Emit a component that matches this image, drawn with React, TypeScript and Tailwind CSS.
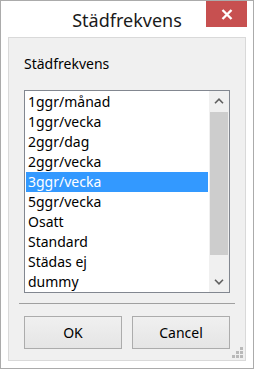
const items = [
  '1ggr/månad',
  '1ggr/vecka',
  '2ggr/dag',
  '2ggr/vecka',
  '3ggr/vecka',
  '5ggr/vecka',
  'Osatt',
  'Standard',
  'Städas ej',
  'dummy',
];

const font = { fontFamily: '"Segoe UI", "Noto Sans", sans-serif' };

function Chevron({ up }: { up?: boolean }) {
  return (
    <svg width="10" height="6" viewBox="0 0 10 6">
      <path
        d={up ? 'M1 5.2 L5 1.2 L9 5.2' : 'M1 0.8 L5 4.8 L9 0.8'}
        fill="none"
        stroke="#606060"
        strokeWidth="1.6"
      />
    </svg>
  );
}

function Grip() {
  // 3-2-1 triangle of dots in the bottom right corner
  const dots = [
    [8, 0],
    [4, 4],
    [8, 4],
    [0, 8],
    [4, 8],
    [8, 8],
  ];
  return (
    <svg width="11" height="11" viewBox="0 0 11 11" className="absolute right-[2px] bottom-[2px]">
      {dots.map(([x, y], i) => (
        <rect key={i} x={x} y={y} width="3" height="3" fill="#b9b9b9" />
      ))}
    </svg>
  );
}

export default function App() {
  const selected = 4;

  return (
    <div
      className="w-[254px] h-[369px] border border-[#ababab] bg-white flex flex-col text-black"
      style={font}
    >
      {/* title bar */}
      <div className="relative h-[36px] shrink-0 flex items-center justify-center">
        <span className="text-[18px] leading-[24px] text-[#1a1a1a] mt-[2px]">Städfrekvens</span>
        <div className="absolute top-0 right-[6px] w-[41px] h-[26px] bg-[#c75050] flex items-center justify-center">
          <svg width="12" height="11" viewBox="0 0 12 11">
            <path d="M1.5 1 L10.5 10 M10.5 1 L1.5 10" stroke="#fff" strokeWidth="2.4" />
          </svg>
        </div>
      </div>

      {/* client area */}
      <div className="relative flex-1 mx-[7px] mb-[7px] border border-[#d9d9d9] bg-[#f0f0f0] flex flex-col px-[15px] pt-[16px]">
        <div className="text-[14px] leading-[19px]">Städfrekvens</div>

        <div className="mt-[17px] h-[203px] border border-[#828790] bg-white flex">
          <div className="flex-1 pt-[1px] flex flex-col">
            {items.map((it, i) => (
              <div
                key={it}
                className={
                  'mx-[1px] h-[20px] leading-[20px] pl-[2px] text-[14px] ' +
                  (i === selected ? 'bg-[#3399ff] text-white' : 'text-black')
                }
              >
                {it}
              </div>
            ))}
          </div>
          <div className="w-[20px] bg-[#f0f0f0] flex flex-col">
            <div className="h-[20px] flex items-center justify-center">
              <Chevron up />
            </div>
            <div className="mx-[1px] mt-[1px] h-[143px] bg-[#cdcdcd]" />
            <div className="flex-1" />
            <div className="h-[20px] flex items-center justify-center">
              <Chevron />
            </div>
          </div>
        </div>

        <div className="-mx-[5px] mt-[10px] border-t border-[#a0a0a0]" />

        <div className="mt-[12px] flex gap-[10px]">
          <button className="flex-1 h-[33px] border border-[#acacac] bg-gradient-to-b from-[#f0f0f0] to-[#e5e5e5] text-[14px] text-black">
            OK
          </button>
          <button className="flex-1 h-[33px] border border-[#acacac] bg-gradient-to-b from-[#f0f0f0] to-[#e5e5e5] text-[14px] text-black">
            Cancel
          </button>
        </div>

        <Grip />
      </div>
    </div>
  );
}
